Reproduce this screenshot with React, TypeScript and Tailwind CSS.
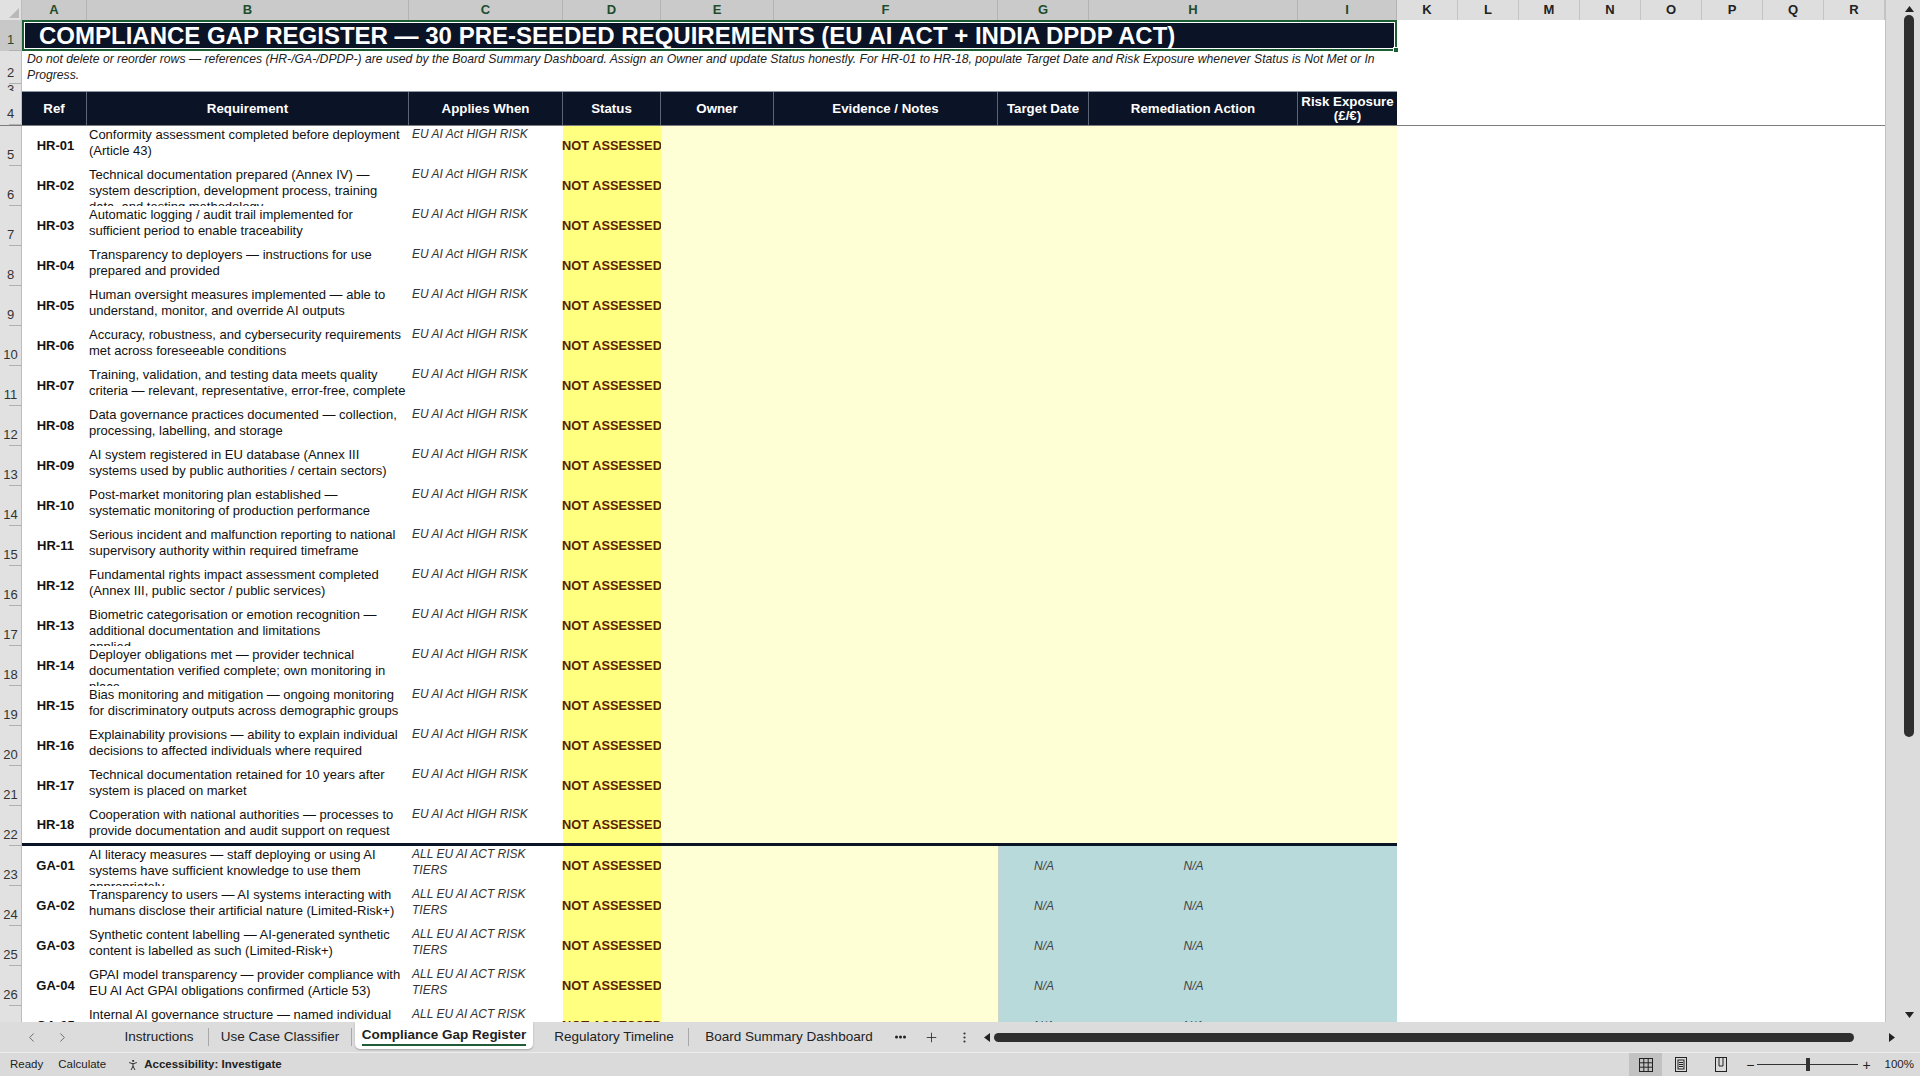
import React from 'react';
import { ChevronLeft, ChevronRight, Plus, PersonStanding } from 'lucide-react';

type Req = { ref: string; lines: string[]; ga?: boolean };

const reqs: Req[] = [
  { ref: 'HR-01', lines: ['Conformity assessment completed before deployment', '(Article 43)'] },
  { ref: 'HR-02', lines: ['Technical documentation prepared (Annex IV) —', 'system description, development process, training', 'data, and testing methodology'] },
  { ref: 'HR-03', lines: ['Automatic logging / audit trail implemented for', 'sufficient period to enable traceability'] },
  { ref: 'HR-04', lines: ['Transparency to deployers — instructions for use', 'prepared and provided'] },
  { ref: 'HR-05', lines: ['Human oversight measures implemented — able to', 'understand, monitor, and override AI outputs'] },
  { ref: 'HR-06', lines: ['Accuracy, robustness, and cybersecurity requirements', 'met across foreseeable conditions'] },
  { ref: 'HR-07', lines: ['Training, validation, and testing data meets quality', 'criteria — relevant, representative, error-free, complete'] },
  { ref: 'HR-08', lines: ['Data governance practices documented — collection,', 'processing, labelling, and storage'] },
  { ref: 'HR-09', lines: ['AI system registered in EU database (Annex III', 'systems used by public authorities / certain sectors)'] },
  { ref: 'HR-10', lines: ['Post-market monitoring plan established —', 'systematic monitoring of production performance'] },
  { ref: 'HR-11', lines: ['Serious incident and malfunction reporting to national', 'supervisory authority within required timeframe'] },
  { ref: 'HR-12', lines: ['Fundamental rights impact assessment completed', '(Annex III, public sector / public services)'] },
  { ref: 'HR-13', lines: ['Biometric categorisation or emotion recognition —', 'additional documentation and limitations', 'applied'] },
  { ref: 'HR-14', lines: ['Deployer obligations met — provider technical', 'documentation verified complete; own monitoring in', 'place'] },
  { ref: 'HR-15', lines: ['Bias monitoring and mitigation — ongoing monitoring', 'for discriminatory outputs across demographic groups'] },
  { ref: 'HR-16', lines: ['Explainability provisions — ability to explain individual', 'decisions to affected individuals where required'] },
  { ref: 'HR-17', lines: ['Technical documentation retained for 10 years after', 'system is placed on market'] },
  { ref: 'HR-18', lines: ['Cooperation with national authorities — processes to', 'provide documentation and audit support on request'] },
  { ref: 'GA-01', ga: true, lines: ['AI literacy measures — staff deploying or using AI', 'systems have sufficient knowledge to use them', 'appropriately'] },
  { ref: 'GA-02', ga: true, lines: ['Transparency to users — AI systems interacting with', 'humans disclose their artificial nature (Limited-Risk+)'] },
  { ref: 'GA-03', ga: true, lines: ['Synthetic content labelling — AI-generated synthetic', 'content is labelled as such (Limited-Risk+)'] },
  { ref: 'GA-04', ga: true, lines: ['GPAI model transparency — provider compliance with', 'EU AI Act GPAI obligations confirmed (Article 53)'] },
  { ref: 'GA-05', ga: true, lines: ['Internal AI governance structure — named individual', 'accountable for AI compliance'] },
];

const otherCols = ['K', 'L', 'M', 'N', 'O', 'P', 'Q', 'R'];

function RowNum({ n, sel }: { n: string; sel?: boolean }) {
  return (
    <div
      className={`w-[22px] shrink-0 flex flex-col items-center justify-end overflow-hidden border-r border-[#bdbdbd] text-[13px] ${
        sel ? 'bg-[#c8c8c8] text-[#1d4d2c]' : 'bg-[#e1e1e1] text-[#333]'
      }`}
    >
      <span className="mb-[3px] leading-[14px]">{n}</span>
      <div className="self-end w-[12px] h-px shrink-0 bg-[#b0b0b0]" />
    </div>
  );
}

function ColHeaders() {
  const sel = [
    ['A', 'w-[65px]'],
    ['B', 'w-[322px]'],
    ['C', 'w-[154px]'],
    ['D', 'w-[98px]'],
    ['E', 'w-[113px]'],
    ['F', 'w-[224px]'],
    ['G', 'w-[91px]'],
    ['H', 'w-[209px]'],
    ['I', 'w-[99px]'],
  ];
  return (
    <div className="flex h-[20px] shrink-0 text-[13px]">
      <div className="w-[22px] shrink-0 flex items-end justify-end bg-[#e1e1e1] border-r border-[#bdbdbd] p-[2px]">
        <svg width="10" height="10" viewBox="0 0 10 10">
          <polygon points="10,0 10,10 0,10" fill="#b9b9b9" />
        </svg>
      </div>
      {sel.map(([l, w]) => (
        <div key={l} className={`${w} shrink-0 flex items-center justify-center bg-[#cacaca] border-r border-[#b3b3b3] text-[#1d4d2c] font-bold`}>
          {l}
        </div>
      ))}
      {otherCols.map((l) => (
        <div key={l} className="w-[61px] shrink-0 flex items-center justify-center bg-[#dedede] border-r border-[#c4c4c4] text-[#222] font-bold">
          {l}
        </div>
      ))}
      <div className="flex-1 bg-[#dedede]" />
    </div>
  );
}

function DataRow({ n, r, divider }: { n: number; r: Req; divider?: boolean }) {
  const applies = r.ga ? ['ALL EU AI ACT RISK', 'TIERS'] : ['EU AI Act HIGH RISK'];
  return (
    <div className="flex h-[40px] shrink-0">
      <RowNum n={String(n)} />
      <div className={`flex w-[1375px] shrink-0 ${divider ? 'border-b-[3px] border-[#0b1326]' : ''}`}>
        <div className="w-[65px] shrink-0 flex items-center justify-center pl-[2px] text-[13px] font-bold text-[#111]">{r.ref}</div>
        <div className="w-[322px] shrink-0 overflow-hidden pl-[2px] pt-[1px] text-[13px] leading-[16px] text-[#111]">
          {r.lines.map((l) => (
            <div key={l} className="whitespace-nowrap">
              {l}
            </div>
          ))}
        </div>
        <div className="w-[154px] shrink-0 overflow-hidden pl-[3px] text-[12px] italic leading-[16px] text-[#333]">
          {applies.map((l) => (
            <div key={l} className="whitespace-nowrap">
              {l}
            </div>
          ))}
        </div>
        <div className="w-[98px] shrink-0 flex items-center justify-center bg-[#ffff80] text-[12.8px] font-bold whitespace-nowrap text-[#5a2102]">
          NOT ASSESSED
        </div>
        <div className="w-[113px] shrink-0 bg-[#ffffd5]" />
        <div className="w-[224px] shrink-0 bg-[#ffffd5]" />
        {r.ga ? (
          <>
            <div className="w-[91px] shrink-0 flex items-center justify-center bg-[#b8dadb] border-l border-[#cdd6c6] text-[12px] italic text-[#444]">N/A</div>
            <div className="w-[209px] shrink-0 flex items-center justify-center bg-[#b8dadb] text-[12px] italic text-[#444]">N/A</div>
            <div className="w-[99px] shrink-0 bg-[#b8dadb]" />
          </>
        ) : (
          <>
            <div className="w-[91px] shrink-0 bg-[#ffffd5]" />
            <div className="w-[209px] shrink-0 bg-[#ffffd5]" />
            <div className="w-[99px] shrink-0 bg-[#ffffd5]" />
          </>
        )}
      </div>
      <div className="flex-1 bg-white" />
    </div>
  );
}

function HeaderRow() {
  const cells = [
    ['Ref', 'w-[65px]'],
    ['Requirement', 'w-[322px]'],
    ['Applies When', 'w-[154px]'],
    ['Status', 'w-[98px]'],
    ['Owner', 'w-[113px]'],
    ['Evidence / Notes', 'w-[224px]'],
    ['Target Date', 'w-[91px]'],
    ['Remediation Action', 'w-[209px]'],
  ];
  return (
    <div className="flex h-[35px] shrink-0 border-b border-[#7d7d7d]">
      <RowNum n="4" />
      <div className="flex w-[1375px] shrink-0 bg-[#0b1326] border-t border-[#8e98a4] text-[13.3px] font-bold text-white">
        {cells.map(([t, w]) => (
          <div key={t} className={`${w} shrink-0 flex items-center justify-center border-r border-[#5b6573]`}>
            {t}
          </div>
        ))}
        <div className="w-[99px] shrink-0 flex flex-col items-center justify-center leading-[14px]">
          <span>Risk Exposure</span>
          <span>(£/€)</span>
        </div>
      </div>
      <div className="flex-1 bg-white" />
    </div>
  );
}

function Sheet() {
  return (
    <div className="flex-1 flex flex-col overflow-hidden border-r border-[#c2c2c2] bg-white">
      <ColHeaders />
      {/* row 1 - title, selected */}
      <div className="flex h-[31px] shrink-0">
        <RowNum n="1" sel />
        <div className="relative w-[1375px] shrink-0 flex items-center bg-[#0b1326] border-2 border-[#1b5e33] shadow-[inset_0_0_0_1px_#ffffff] pl-[15px]">
          <span className="text-[24px] font-bold text-white whitespace-nowrap leading-none">
            COMPLIANCE GAP REGISTER — 30 PRE-SEEDED REQUIREMENTS (EU AI ACT + INDIA DPDP ACT)
          </span>
          <div className="absolute -right-[4px] -bottom-[4px] w-[6px] h-[6px] bg-[#1b5e33] border border-white" />
        </div>
        <div className="flex-1" />
      </div>
      {/* row 2 - note */}
      <div className="flex h-[33px] shrink-0">
        <RowNum n="2" />
        <div className="w-[1375px] shrink-0 pl-[5px] text-[12.2px] italic leading-[16px] text-[#222]">
          <div className="whitespace-nowrap">
            Do not delete or reorder rows — references (HR-/GA-/DPDP-) are used by the Board Summary Dashboard. Assign an Owner and update Status honestly. For HR-01 to HR-18, populate Target Date and Risk Exposure whenever Status is Not Met or In
          </div>
          <div>Progress.</div>
        </div>
        <div className="flex-1" />
      </div>
      {/* row 3 */}
      <div className="flex h-[7px] shrink-0">
        <div className="w-[22px] shrink-0 flex flex-col items-center overflow-hidden border-r border-[#bdbdbd] bg-[#e1e1e1] text-[13px] text-[#333]">
          <span className="-mt-[1px] leading-[14px]">3</span>
        </div>
        <div className="flex-1" />
      </div>
      <HeaderRow />
      {reqs.map((r, i) => (
        <DataRow key={r.ref} n={i + 5} r={r} divider={r.ref === 'HR-18'} />
      ))}
    </div>
  );
}

function VScroll() {
  return (
    <div className="w-[34px] shrink-0 flex flex-col items-center bg-[#dcdcdc] pl-[12px] pt-[6px] pb-[4px]">
      <svg width="9" height="6" viewBox="0 0 9 6">
        <polygon points="4.5,0 9,6 0,6" fill="#222" />
      </svg>
      <div className="mt-[3px] w-[10px] h-[722px] rounded-full bg-[#2f2f2f]" />
      <div className="flex-1" />
      <svg width="9" height="6" viewBox="0 0 9 6">
        <polygon points="0,0 9,0 4.5,6" fill="#222" />
      </svg>
    </div>
  );
}

function TabBar() {
  return (
    <div className="flex h-[30px] shrink-0 items-center bg-[#dcdcdc] text-[13.5px] text-[#222]">
      <div className="w-[110px] shrink-0 flex items-center text-[#666]">
        <ChevronLeft size={15} strokeWidth={1.5} className="ml-[24px]" />
        <ChevronRight size={15} strokeWidth={1.5} className="ml-[16px]" />
      </div>
      <div className="w-[98px] shrink-0 text-center">Instructions</div>
      <div className="w-px h-[18px] bg-[#a8a8a8]" />
      <div className="w-[142px] shrink-0 text-center">Use Case Classifier</div>
      <div className="w-px h-[18px] bg-[#a8a8a8]" />
      <div className="ml-[3px] w-[178px] h-[27px] self-start shrink-0 flex justify-center bg-white rounded-b-[5px] shadow-[0_1px_2px_rgba(0,0,0,0.25)]">
        <span className="mt-[4px] h-[20px] font-bold border-b-2 border-[#1f5d36] leading-[17px]">Compliance Gap Register</span>
      </div>
      <div className="ml-[7px] w-[148px] shrink-0 text-center">Regulatory Timeline</div>
      <div className="w-px h-[18px] bg-[#a8a8a8]" />
      <div className="w-[200px] shrink-0 text-center">Board Summary Dashboard</div>
      <div className="w-[23px] shrink-0 flex justify-center">
        <svg width="11" height="4" viewBox="0 0 11 4">
          <circle cx="1.5" cy="2" r="1.5" fill="#222" />
          <circle cx="5.5" cy="2" r="1.5" fill="#222" />
          <circle cx="9.5" cy="2" r="1.5" fill="#222" />
        </svg>
      </div>
      <div className="ml-[6px] w-[26px] shrink-0 flex justify-center">
        <Plus size={15} strokeWidth={1.3} />
      </div>
      <div className="ml-[8px] w-[24px] shrink-0 flex justify-center">
        <svg width="3" height="11" viewBox="0 0 3 11">
          <circle cx="1.5" cy="1.5" r="1.1" fill="#333" />
          <circle cx="1.5" cy="5.5" r="1.1" fill="#333" />
          <circle cx="1.5" cy="9.5" r="1.1" fill="#333" />
        </svg>
      </div>
      <div className="ml-[8px] flex-1 flex items-center">
        <svg width="6" height="9" viewBox="0 0 6 9">
          <polygon points="6,0 6,9 0,4.5" fill="#222" />
        </svg>
        <div className="ml-[4px] w-[860px] h-[9px] rounded-full bg-[#2f2f2f]" />
        <div className="flex-1" />
        <svg width="6" height="9" viewBox="0 0 6 9" className="mr-[25px]">
          <polygon points="0,0 6,4.5 0,9" fill="#222" />
        </svg>
      </div>
    </div>
  );
}

function StatusBar() {
  return (
    <div className="flex h-[24px] shrink-0 items-center bg-[#dadada] border-t border-[#ececec] text-[11.5px] text-[#222]">
      <span className="ml-[10px]">Ready</span>
      <span className="ml-[15px]">Calculate</span>
      <PersonStanding size={14} strokeWidth={1.6} className="ml-[20px]" />
      <span className="ml-[4px] font-bold">Accessibility: Investigate</span>
      <div className="flex-1" />
      <div className="w-[33px] h-[23px] flex items-center justify-center bg-[#c2c2c2]">
        <svg width="14" height="14" viewBox="0 0 14 14" fill="none" stroke="#222" strokeWidth="1">
          <rect x="0.5" y="0.5" width="13" height="13" />
          <line x1="4.8" y1="0.5" x2="4.8" y2="13.5" />
          <line x1="9.2" y1="0.5" x2="9.2" y2="13.5" />
          <line x1="0.5" y1="4.8" x2="13.5" y2="4.8" />
          <line x1="0.5" y1="9.2" x2="13.5" y2="9.2" />
        </svg>
      </div>
      <svg width="12" height="15" viewBox="0 0 12 15" fill="none" stroke="#222" strokeWidth="1" className="ml-[13px]">
        <rect x="0.5" y="0.5" width="11" height="14" />
        <rect x="3" y="3" width="6" height="9" />
        <line x1="4" y1="5.5" x2="8" y2="5.5" />
        <line x1="4" y1="7.5" x2="8" y2="7.5" />
        <line x1="4" y1="9.5" x2="8" y2="9.5" />
      </svg>
      <svg width="12" height="15" viewBox="0 0 12 15" fill="none" stroke="#222" strokeWidth="1" className="ml-[28px]">
        <rect x="0.5" y="0.5" width="11" height="14" />
        <line x1="4" y1="0.5" x2="4" y2="9" />
        <line x1="8" y1="0.5" x2="8" y2="9" />
        <line x1="4" y1="9" x2="8" y2="9" />
      </svg>
      <span className="ml-[19px] text-[14px] leading-none">−</span>
      <div className="ml-[3px] w-[101px] flex items-center">
        <div className="w-[49px] h-px bg-[#333]" />
        <div className="w-[4px] h-[13px] bg-[#333]" />
        <div className="w-[48px] h-px bg-[#333]" />
      </div>
      <span className="ml-[4px] text-[14px] leading-none">+</span>
      <span className="ml-[14px] mr-[6px]">100%</span>
    </div>
  );
}

export default function App() {
  return (
    <div className="w-[1920px] h-[1076px] overflow-hidden flex flex-col bg-white font-['Liberation_Sans',Arial,sans-serif] text-[#111]">
      <div className="flex h-[1022px] shrink-0">
        <Sheet />
        <VScroll />
      </div>
      <TabBar />
      <StatusBar />
    </div>
  );
}
